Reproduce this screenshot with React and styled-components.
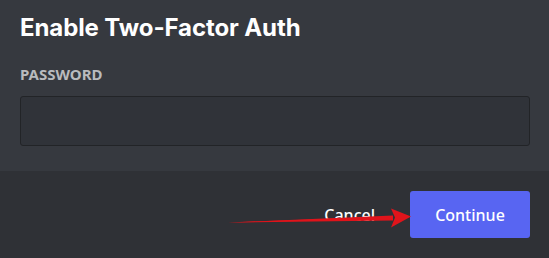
import React from 'react'
import styled, { createGlobalStyle } from 'styled-components'

const GlobalStyle = createGlobalStyle`
  html, body {
    margin: 0;
    padding: 0;
    background: #2f3136;
  }
  body {
    font-family: "Noto Sans", "Open Sans", sans-serif;
  }
`

const Modal = styled.div`
  position: relative;
  width: 549px;
  height: 258px;
  display: flex;
  flex-direction: column;
  background: #36393f;
  border-radius: 0 0 0 5px;
  overflow: hidden;
`

const Header = styled.div`
  padding: 13px 20px 0;
`

const Title = styled.h2`
  margin: 0;
  font-family: Inter, "Noto Sans", sans-serif;
  font-size: 24px;
  font-weight: 700;
  line-height: 30px;
  color: #ffffff;
  letter-spacing: -0.1px;
`

const Body = styled.div`
  padding: 21px 19px 25px 20px;
  display: flex;
  flex-direction: column;
`

const Label = styled.label`
  font-family: "Noto Sans", sans-serif;
  font-size: 15px;
  font-weight: 700;
  line-height: 20px;
  text-transform: uppercase;
  color: #b9bbbe;
  margin-bottom: 12px;
`

const Input = styled.input`
  box-sizing: border-box;
  height: 50px;
  width: 100%;
  background: #303339;
  border: 1px solid #222427;
  border-radius: 3px;
  outline: none;
  color: #dcddde;
  font-size: 16px;
  padding: 0 10px;
`

const Footer = styled.div`
  flex: 1;
  background: #2f3136;
  display: flex;
  align-items: center;
  justify-content: flex-end;
  gap: 35px;
  padding: 0 19px 0 16px;
`

const LinkButton = styled.button`
  background: none;
  border: none;
  padding: 0;
  color: #ffffff;
  font-family: "Noto Sans", sans-serif;
  font-size: 16px;
  font-weight: 500;
  cursor: pointer;
`

const PrimaryButton = styled.button`
  width: 120px;
  height: 47px;
  background: #5865f2;
  border: none;
  border-radius: 3px;
  color: #ffffff;
  font-family: "Noto Sans", sans-serif;
  font-size: 16px;
  font-weight: 500;
  cursor: pointer;
`

const Arrow = styled.svg`
  position: absolute;
  left: 0;
  top: 0;
  pointer-events: none;
`

export default function App() {
  return (
    <>
      <GlobalStyle />
      <Modal>
        <Header>
          <Title>Enable Two-Factor Auth</Title>
        </Header>
        <Body>
          <Label>Password</Label>
          <Input type="password" />
        </Body>
        <Footer>
          <LinkButton>Cancel</LinkButton>
          <PrimaryButton>Continue</PrimaryButton>
        </Footer>
        <Arrow width="549" height="258" viewBox="0 0 549 258">
          <path d="M228 222.5 L393 216.5 L393 220.5 Z" fill="#e0141b" />
          <path d="M228 222.5 L393 219 L393 215.5 Z" fill="#e0141b" />
          <path d="M411 216.5 L391 208.5 L395 217.5 L391 227.5 Z" fill="#e0141b" />
        </Arrow>
      </Modal>
    </>
  )
}
